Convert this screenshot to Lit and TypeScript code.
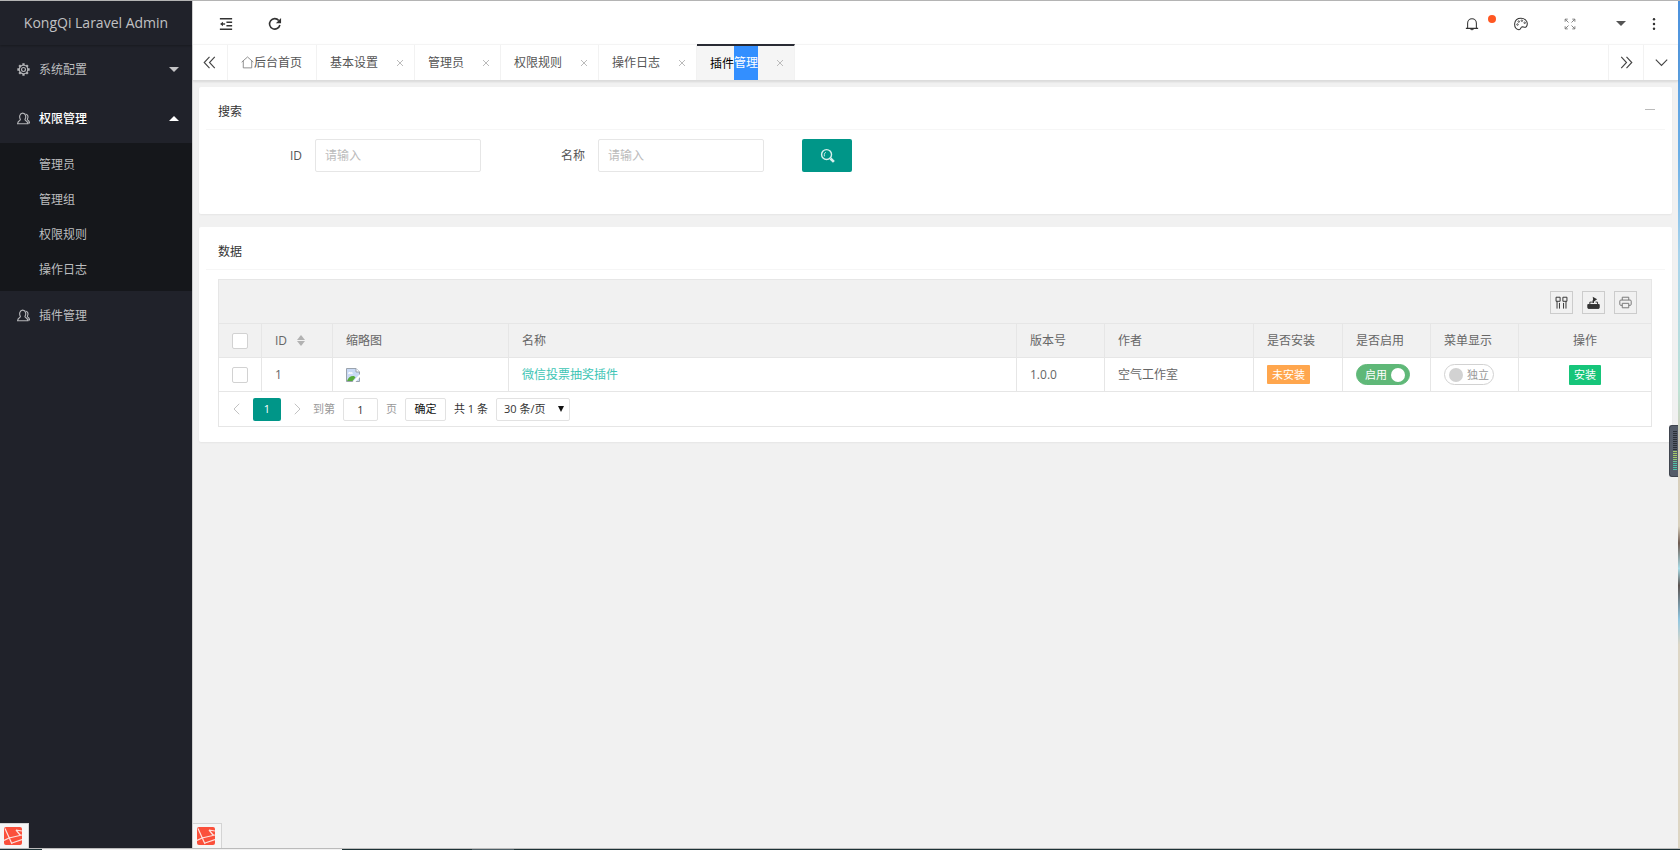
import { LitElement, html, css, svg, nothing } from "lit";
import { customElement, property, state } from "lit/decorators.js";
import { classMap } from "lit/directives/class-map.js";

const glyphs: Record<string, unknown> = {
  gear: svg`<circle cx="8" cy="8" r="2.4"/><circle cx="8" cy="8" r="5.200"/><path d="M8 .4v2.200M8 13.400v2.200M.4 8h2.200M13.400 8h2.200M2.700 2.700l1.500 1.500M11.800 11.800l1.500 1.500M2.700 13.300l1.500-1.500M11.800 4.200l1.500-1.500" stroke-width="2.800"/>`,
  users: svg`<path d="M4 8.6C2.6 6.4 3.2 1.4 7 1.4s4.400 5 3 7.200c-.4.9-.2 1.400.7 1.900 1.500.8 2.500 1.600 2.700 4H.7c.2-2.400 1.100-3.200 2.600-4 .9-.5 1.100-1 .7-1.900z"/><path d="M10.500 2.400c3 .2 3.600 3.800 2.400 6 -.3.9-.2 1.200.6 1.700 1.200.7 1.800 1.600 1.900 3.400h-2"/>`,
  indent: svg`<path d="M1 2h14M8.500 6H15M8.500 10H15M1 14h14"/><path d="M1.200 8 4.600 5.400v5.200z" fill="currentColor" stroke="none"/><path d="M4 8h3"/>`,
  refresh: svg`<path d="M13.600 9.200a6 6 0 1 1-1.300-5.300" stroke-width="1.800"/><path d="M14.900 1v6H9z" fill="currentColor" stroke="none"/>`,
  home: svg`<path d="M.8 7.600 8 1.200l7.200 6.400M2.800 6v8.600h10.400V6"/>`,
  left: svg`<path d="M8 1 1.500 8 8 15M14.500 1 8 8l6.500 7"/>`,
  right: svg`<path d="m1.500 1L8 8l-6.500 7M8 1l6.500 7L8 15"/>`,
  down: svg`<path d="m1 4.500 7 7 7-7"/>`,
  close: svg`<path d="m2 2 12 12M14 2 2 14"/>`,
  prev: svg`<path d="M11 1 4 8l7 7"/>`,
  next: svg`<path d="m5 1 7 7-7 7"/>`,
  bell: svg`<path d="M1 13h14M3 13V7a5 5 0 0 1 10 0v6M6.500 13.500a1.600 1.600 0 0 0 3 0"/>`,
  palette: svg`<path d="M5.500 14.500c-3.400-.6-5-3.600-4.700-7C1.200 3.700 4.300 1.500 8 1.500c4 0 7.200 2.600 7.200 6 0 3-1.600 4.700-3.600 4.200-1.500-.4-2.400-.9-3.200 0-.9 1-1 3.100-2.900 2.800z"/><g stroke-width=".9"><circle cx="4" cy="8.600" r=".9"/><circle cx="5.400" cy="5.200" r=".9"/><circle cx="9" cy="4.200" r=".9"/><circle cx="12.200" cy="6.600" r=".9"/></g>`,
  full: svg`<path d="M1.500 5V1.500H5M1.500 1.500 6 6M11 1.500h3.500V5M14.500 1.500 10 6M1.500 11v3.500H5M1.500 14.500 6 10M14.500 11v3.500H11M14.500 14.500 10 10"/>`,
  dots: svg`<g fill="currentColor" stroke="none"><circle cx="8" cy="2.500" r="1.400"/><circle cx="8" cy="8" r="1.400"/><circle cx="8" cy="13.500" r="1.400"/></g>`,
  search: svg`<circle cx="7" cy="7" r="5.300"/><path d="M4.600 9V7a2.600 2.600 0 0 1 1.600-2.400" stroke-width="1"/><path d="m11.200 11.200 3.600 3.600" stroke-width="2.800"/>`,
  columns: svg`<path d="M1.300 1.500h5v5h-5zM9.700 1.500h5v5h-5zM2.500 6.500v9M5.500 8.500v7M10.500 8.500v7M13.500 6.500v9"/>`,
  exporter: svg`<path d="M1 10.500h14v4a1 1 0 0 1-1 1H2a1 1 0 0 1-1-1z" fill="currentColor"/><path d="M3.500 10V7.500H6M13 10V7.500h-2.500"/><path d="M7.500 8.500c0-3 .5-4 2-4.500" stroke-width="2"/><path d="M7 .8 12.500 4 8 7z" fill="currentColor" stroke="none"/>`,
  printer: svg`<path d="M4 5V1.500h8V5M4 11.500H2.300A1.300 1.300 0 0 1 1 10.200V6.300A1.300 1.300 0 0 1 2.300 5h11.400A1.300 1.300 0 0 1 15 6.300v3.900a1.300 1.300 0 0 1-1.300 1.300H12M4 9h8v5.500H4z"/>`,
};

const icon = (name: string, cls = "") =>
  html`<svg class="icon ${cls}" viewBox="0 0 16 16" aria-hidden="true">${glyphs[name]}</svg>`;

const base = css`
  * { box-sizing: border-box; }
  button, input, select { font: inherit; color: inherit; margin: 0; }
  button { background: none; border: 0; padding: 0; cursor: pointer; }
  a { color: inherit; text-decoration: none; }
  .icon {
    width: 14px; height: 14px; display: block; flex: none;
    fill: none; stroke: currentColor; stroke-width: 1.2;
  }
`;

@customElement("debug-badge")
class DebugBadge extends LitElement {
  static styles = [base, css`
    :host { display: block; box-sizing: border-box; width: 29px; height: 25px; background: #f6f6f6; border: 1px solid #d4d4d4; border-width: 1px 1px 0 0; padding: 3px 0 0 4px; }
    .mark { display: block; width: 18px; height: 18px; }
  `];
  render() {
    return html`<svg class="mark" viewBox="0 0 18 18" role="img" aria-label="Laravel">
      <rect width="18" height="18" rx="2" fill="#fb503b"/>
      <path d="M1 1.500 8 17M0 13.500 5 11l13-3M12 3l6 1M12 3l4.500 5.500M8 16l10-3.500" fill="none" stroke="#fde3df" stroke-width="1.200"/>
    </svg>`;
  }
}

interface MenuItem { title: string; glyph: string; children?: string[]; open?: boolean; }

@customElement("side-menu")
class SideMenu extends LitElement {
  @state() items: MenuItem[] = [
    { title: "系统配置", glyph: "gear", children: [] },
    { title: "权限管理", glyph: "users", children: ["管理员", "管理组", "权限规则", "操作日志"], open: true },
    { title: "插件管理", glyph: "users" },
  ];
  static styles = [base, css`
    :host { display: flex; flex-direction: column; background: #20222a; color: #bcbdbf; }
    .logo {
      height: 44px; line-height: 44px; text-align: center; font-size: 14px;
      color: #c0c1c3; box-shadow: 0 1px 2px rgba(0, 0, 0, .25);
    }
    nav { flex: 1; }
    ul { list-style: none; margin: 0; padding: 0; }
    .top { display: flex; align-items: center; width: 100%; height: 49px; padding: 0 13px 0 17px; gap: 9px; text-align: left; }
    .top .icon { width: 13px; height: 13px; color: #b4b5b8; stroke-width: 1.4; }
    .top .label { flex: 1; }
    .top.open { color: #fff; font-weight: 500; }
    .caret { border: 5px solid transparent; border-top-color: #c4c4c6; border-bottom-width: 0; }
    .open .caret { border-top-width: 0; border-bottom: 5px solid #fff; }
    .sub { background: #15171b; padding: 4px 0; }
    .sub a { display: block; line-height: 35px; padding-left: 39px; }
  `];
  render() {
    return html`
      <div class="logo">KongQi Laravel Admin</div>
      <nav><ul>
        ${this.items.map((m) => html`<li>
          <button class=${classMap({ top: true, open: !!m.open })}>
            ${icon(m.glyph)}<span class="label">${m.title}</span>
            ${m.children ? html`<span class="caret"></span>` : nothing}
          </button>
          ${m.open ? html`<ul class="sub">${m.children!.map((c) => html`<li><a href="#">${c}</a></li>`)}</ul>` : nothing}
        </li>`)}
      </ul></nav>
      <debug-badge></debug-badge>`;
  }
}

@customElement("top-bar")
class TopBar extends LitElement {
  static styles = [base, css`
    :host { display: flex; justify-content: space-between; height: 43px; padding-left: 8px; background: #fff; color: #333; }
    .group { display: flex; }
    .tool { width: 49px; height: 45px; display: grid; place-items: center; position: relative; }
    .strong .icon { stroke-width: 1.6; }
    .dot { position: absolute; top: 14px; right: 0; width: 8px; height: 8px; border-radius: 50%; background: #ff5722; }
    .small .icon { width: 12px; height: 12px; color: #777; }
    .user { width: 35px; justify-items: end; padding-right: 3px; }
    .caret { border: 5px solid transparent; border-top-color: #555; border-bottom-width: 0; }
  `];
  render() {
    return html`
      <div class="group strong">
        <button class="tool" aria-label="侧边伸缩">${icon("indent")}</button>
        <button class="tool" aria-label="刷新">${icon("refresh")}</button>
      </div>
      <div class="group">
        <button class="tool" aria-label="消息">${icon("bell")}<span class="dot"></span></button>
        <button class="tool" aria-label="主题">${icon("palette")}</button>
        <button class="tool small" aria-label="全屏">${icon("full")}</button>
        <button class="tool user" aria-label="用户"><span class="caret"></span></button>
        <button class="tool" aria-label="更多">${icon("dots")}</button>
      </div>`;
  }
}

@customElement("page-tabs")
class PageTabs extends LitElement {
  @property({ type: Array }) tabs = ["基本设置", "管理员", "权限规则", "操作日志"];
  static styles = [base, css`
    :host {
      display: flex; height: 37px; background: #fff; color: #555; position: relative;
      border-top: 1px solid #f4f4f4; border-bottom: 1px solid #dcdcdc; box-shadow: 0 1px 2px rgba(0, 0, 0, .1);
    }
    .ctl { width: 35px; display: grid; place-items: center; border-left: 1px solid #f2f2f2; color: #444; }
    .ctl.first { padding-right: 1px; border-left: 0; border-right: 1px solid #f2f2f2; }
    .ctl .icon { width: 13px; height: 13px; stroke-width: 1.4; }
    .list { flex: 1; display: flex; min-width: 0; }
    .tab { display: flex; align-items: center; padding: 0 14px 0 13px; border-right: 1px solid #f2f2f2; line-height: 33px; }
    .tab .icon { width: 13px; height: 13px; color: #777; stroke-width: 1; }
    .close { margin-left: 16px; padding: 2px; }
    .close .icon { width: 8px; height: 8px; color: #bbb; stroke-width: 2; }
    .closable { padding-right: 8px; }
    .active { background: #f5f5f5; color: #000; border-top: 2px solid #292b34; margin-top: -1px; }
    .marked { background: #338fff; color: #fff; line-height: 34px; }
  `];
  render() {
    const close = html`<button class="close" aria-label="关闭">${icon("close")}</button>`;
    return html`
      <button class="ctl first" aria-label="向左">${icon("left")}</button>
      <div class="list">
        <a class="tab" href="#">${icon("home")}后台首页</a>
        ${this.tabs.map((t) => html`<div class="tab closable"><a href="#">${t}</a>${close}</div>`)}
        <div class="tab closable active"><a href="#">插件</a><a href="#" class="marked">管理</a>${close}</div>
      </div>
      <button class="ctl" aria-label="向右">${icon("right")}</button>
      <button class="ctl" aria-label="标签操作">${icon("down")}</button>`;
  }
}

@customElement("panel-card")
class PanelCard extends LitElement {
  @property() heading = "";
  @property({ type: Boolean }) foldable = false;
  static styles = [base, css`
    :host { display: block; background: #fff; border-radius: 2px; padding: 7px 7px 15px; box-shadow: 0 1px 2px rgba(0, 0, 0, .05); }
    header { display: flex; justify-content: space-between; align-items: center; height: 36px; padding: 0 10px 0 12px; border-bottom: 1px solid #f6f6f6; color: #333; }
    h2 { font: inherit; margin: 0; }
    .fold { width: 10px; height: 6px; display: flex; }
    .fold::before { content: ""; display: block; width: 100%; height: 1px; background: #bbb; }
    .body { padding: 9px 13px 0 12px; }
  `];
  render() {
    return html`
      <header><h2>${this.heading}</h2>${this.foldable ? html`<button class="fold" aria-label="收起"></button>` : nothing}</header>
      <div class="body"><slot></slot></div>`;
  }
}

@customElement("search-form")
class SearchForm extends LitElement {
  static styles = [base, css`
    form { display: flex; gap: 20px; padding-bottom: 27px; }
    .field { display: flex; align-items: center; }
    label { width: 97px; padding-right: 13px; text-align: right; color: #555; }
    .text { width: 166px; height: 33px; border: 1px solid #e6e6e6; border-radius: 2px; padding: 0 9px; background: #fff; outline: none; }
    .text::placeholder { color: #bbb; }
    .go { width: 50px; height: 33px; margin-left: 18px; border-radius: 2px; background: #009688; color: #d9f0ee; display: grid; place-items: center; }
    .go .icon { width: 15px; height: 15px; stroke-width: 1.5; }
  `];
  render() {
    return html`<form @submit=${(e: Event) => e.preventDefault()}>
      <div class="field"><label for="fid">ID</label><input id="fid" class="text" placeholder="请输入"></div>
      <div class="field"><label for="fname">名称</label><input id="fname" class="text" placeholder="请输入"></div>
      <button class="go" aria-label="搜索">${icon("search")}</button>
    </form>`;
  }
}

interface Plugin { id: number; name: string; version: string; author: string; }

@customElement("plugin-table")
class PluginTable extends LitElement {
  @state() rows: Plugin[] = [{ id: 1, name: "微信投票抽奖插件", version: "1.0.0", author: "空气工作室" }];
  static styles = [base, css`
    :host { display: block; border: 1px solid #e6e6e6; color: #666; }
    .tools { display: flex; justify-content: flex-end; align-items: center; gap: 9px; height: 44px; padding: 2px 14px 0 0; background: #f1f1f1; border-bottom: 1px solid #e6e6e6; }
    .tools button { width: 23px; height: 23px; border: 1px solid #ccc; display: grid; place-items: center; color: #333; }
    .tools .icon { width: 13px; height: 13px; }
    .tools button:last-child { color: #777; }
    table { width: 100%; table-layout: fixed; border-collapse: separate; border-spacing: 0; }
    th, td { height: 34px; padding: 0 13px; text-align: left; font-weight: 400; white-space: nowrap; border: solid #e6e6e6; border-width: 0 1px 1px 0; }
    th { background: #f1f1f1; }
    th:last-child, td:last-child { text-align: center; border-right: 0; }
    .c-check { width: 43px; } .c-id { width: 71px; } .c-thumb { width: 176px; } .c-std { width: 88px; }
    .c-inst { width: 89px; } .c-author { width: 149px; } .c-act { width: 132px; }
    .check { appearance: none; display: block; width: 16px; height: 16px; border: 1px solid #d2d2d2; border-radius: 2px; background: #fff; }
    .sort { display: inline-flex; align-items: center; gap: 10px; }
    .arrows { display: grid; gap: 1px; }
    .up, .dn { border: 4px solid transparent; }
    .up { border-top-width: 0; border-bottom: 5px solid #b2b2b2; }
    .dn { border-bottom-width: 0; border-top: 5px solid #b2b2b2; }
    .broken { display: block; width: 14px; height: 14px; }
    .name { color: #3ec5b5; }
    .badge { display: inline-block; font-size: 11px; line-height: 19px; padding: 0 5px; border-radius: 1px; background: #ffa64d; color: #fff; vertical-align: middle; }
    .switch { display: inline-flex; align-items: center; gap: 4px; height: 21px; padding: 0 4px 0 4px; border: 1px solid #d2d2d2; border-radius: 11px; background: #fff; color: #999; font-size: 11px; vertical-align: middle; }
    .switch input { appearance: none; width: 14px; height: 14px; border-radius: 50%; background: #d2d2d2; }
    .switch.on { flex-direction: row-reverse; padding: 0 4px 0 8px; background: #5fb878; border-color: #5fb878; color: #fff; }
    .switch.on input { background: #fff; }
    .install { font-size: 11px; line-height: 20px; padding: 0 5px; border-radius: 1px; background: #16c57a; color: #fff; vertical-align: middle; }
    .pager { display: flex; align-items: center; height: 34px; padding-left: 10px; font-size: 11px; color: #333; }
    .pager .icon { width: 12px; height: 12px; color: #bbb; margin: 0 2px; }
    .page { width: 28px; height: 23px; margin: 0 8px; border-radius: 2px; background: #009688; color: #fff; }
    .muted { color: #999; }
    .jump { width: 35px; height: 23px; margin: 0 8px; padding: 0; text-align: center; border: 1px solid #e2e2e2; border-radius: 2px; outline: none; }
    .next { margin-right: 8px; display: block; }
    .ok { width: 41px; height: 23px; margin: 0 8px; border: 1px solid #e2e2e2; border-radius: 2px; color: #111; }
    .size { display: inline-grid; align-items: center; margin-left: 8px; }
    .size select, .size .tri { grid-area: 1 / 1; }
    .size select { appearance: none; width: 74px; height: 23px; padding: 0 7px; border: 1px solid #e2e2e2; border-radius: 2px; background: #fff; outline: none; }
    .tri { justify-self: end; margin-right: 6px; border: 3px solid transparent; border-top: 6px solid #111; border-bottom-width: 0; pointer-events: none; }
  `];
  render() {
    return html`
      <div class="tools">
        <button aria-label="筛选列">${icon("columns")}</button>
        <button aria-label="导出">${icon("exporter")}</button>
        <button aria-label="打印">${icon("printer")}</button>
      </div>
      <table>
        <colgroup><col class="c-check"><col class="c-id"><col class="c-thumb"><col><col class="c-std"><col class="c-author"><col class="c-inst"><col class="c-std"><col class="c-std"><col class="c-act"></colgroup>
        <thead><tr>
          <th><input class="check" type="checkbox" aria-label="全选"></th>
          <th><span class="sort">ID<span class="arrows"><span class="up"></span><span class="dn"></span></span></span></th>
          <th>缩略图</th><th>名称</th><th>版本号</th><th>作者</th><th>是否安装</th><th>是否启用</th><th>菜单显示</th><th>操作</th>
        </tr></thead>
        <tbody>${this.rows.map((r) => html`<tr>
          <td><input class="check" type="checkbox" aria-label="选择"></td>
          <td>${r.id}</td>
          <td><svg class="broken" viewBox="0 0 14 14" role="img" aria-label="缩略图">
            <path d="M.5.500h9.500l3.500 3.500v9.500H.5z" fill="#c9daf6" stroke="#9aa3ad"/>
            <path d="M2 5.500c0-1.500 2-2 2.600-1 1.400-.6 2.400.2 2.200 1.300H2z" fill="#fff"/>
            <path d="M1 13c1-3.500 4-5.500 7-5l1.500 1.500L6.500 13z" fill="#56ab3c"/>
            <path d="M14 6 6.500 14H9.500L14 9z" fill="#fff"/>
            <path d="M10 .5V4h3.500" fill="#fff" stroke="#9aa3ad"/>
          </svg></td>
          <td><a class="name" href="#">${r.name}</a></td>
          <td>${r.version}</td>
          <td>${r.author}</td>
          <td><span class="badge">未安装</span></td>
          <td><label class="switch on"><input type="checkbox" checked>启用</label></td>
          <td><label class="switch"><input type="checkbox">独立</label></td>
          <td><button class="install">安装</button></td>
        </tr>`)}</tbody>
      </table>
      <div class="pager">
        <button aria-label="上一页">${icon("prev")}</button>
        <button class="page">1</button>
        <button class="next" aria-label="下一页">${icon("next")}</button>
        <label class="muted" for="jump">到第</label><input id="jump" class="jump" value="1"><span class="muted">页</span>
        <button class="ok">确定</button>
        <span>共 1 条</span>
        <span class="size"><select aria-label="每页条数"><option>30 条/页</option></select><span class="tri"></span></span>
      </div>`;
  }
}

@customElement("app-root")
class AppRoot extends LitElement {
  static styles = [base, css`
    :host {
      display: grid; grid-template: 1fr 2px / 1fr 2px; height: 100vh; overflow: hidden; position: relative;
      border-top: 1px solid #b4b4b4; box-sizing: border-box;
      font: 12px/18px "Open Sans", "Noto Sans CJK SC", sans-serif; color: #333;
    }
    .app { display: grid; grid-template-columns: 192px 1fr; min-height: 0; }
    .main { display: flex; flex-direction: column; min-width: 0; background: #f1f1f1; border-left: 1px solid #d0d0d0; }
    .content { flex: 1; display: flex; flex-direction: column; gap: 13px; padding: 6px; }
    .edge { background: linear-gradient(#4a90dc, #6aaee6 18%, #a8d4ec 30%, #bfe3d6 46%, #d9ceb8 52%, #d8d0bc 62%, #6d5a50 64%, #a9dbe6 67%, #5a5350 69%, #8fc6e0 73%, #ddd6c4 76%); }
    .dock { grid-column: 1 / -1; border-top: 1px solid #bbb; background: linear-gradient(90deg, #1d3236 42px, #f2f2f2 42px 342px, #1d3236 342px 472px, #4d5f66 472px 514px, #1d3236 514px); }
    .meter { position: absolute; right: 2px; top: 424px; width: 9px; height: 52px; border: 1px solid #3f444e; border-right: 0; border-radius: 3px 0 0 3px; background: #555c69; padding: 5px 1px 5px 3px; }
    .bars { height: 100%; background: repeating-linear-gradient(transparent 0 1px, #555c69 1px 2px), linear-gradient(#2b2f36 50%, #a3c96a 50% 68%, #4fc3a8 80%); }
  `];
  render() {
    return html`
      <div class="app">
        <side-menu></side-menu>
        <div class="main">
          <top-bar></top-bar>
          <page-tabs></page-tabs>
          <div class="content">
            <panel-card heading="搜索" foldable><search-form></search-form></panel-card>
            <panel-card heading="数据"><plugin-table></plugin-table></panel-card>
          </div>
          <debug-badge></debug-badge>
        </div>
      </div>
      <div class="edge"></div>
      <div class="dock"></div>
      <div class="meter"><div class="bars"></div></div>`;
  }
}
